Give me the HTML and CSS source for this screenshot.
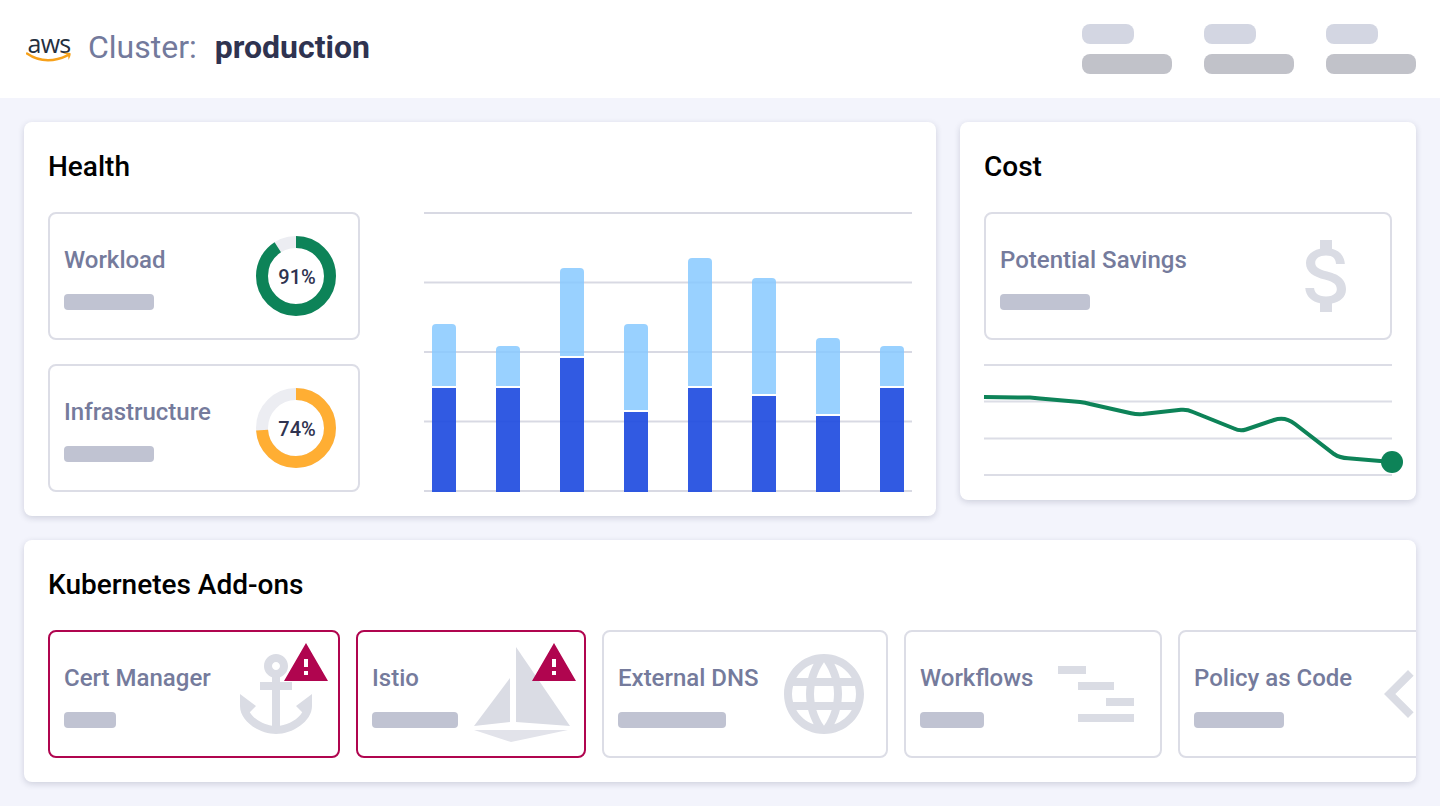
FILE: index.html
```html
<!DOCTYPE html>
<html lang="en">
<head>
<meta charset="utf-8">
<title>Cluster: production</title>
<link rel="stylesheet" href="styles.css">
</head>
<body>
<header class="topbar">
  <div class="cluster">
    <div class="aws">
      <span class="aws-word">aws</span>
      <svg class="aws-smile" width="46" height="12" viewBox="0 0 46 12"><path d="M1 1.500C7 5.700 14 8.200 22 8.200c7 0 13-1.600 19-4.600" fill="none" stroke="#f7a11a" stroke-width="2.400" stroke-linecap="round"/><path d="M37 1.200c2.600-.5 6-.6 7.600 0 .4 1.500-.8 4.800-2.200 6.800.2-2-.1-3.800-.8-5.100-1.200-.6-2.800-1.100-4.600-1.700z" fill="#f7a11a"/></svg>
    </div>
    <span class="cluster-label">Cluster:</span>
    <strong class="cluster-name">production</strong>
  </div>
  <div class="top-stats">
    <div class="top-stat"><i class="bar-top"></i><i class="bar-bottom"></i></div>
    <div class="top-stat"><i class="bar-top"></i><i class="bar-bottom"></i></div>
    <div class="top-stat"><i class="bar-top"></i><i class="bar-bottom"></i></div>
  </div>
</header>

<main class="content">
  <div class="row-top">
    <section class="card health">
      <h2 class="card-title">Health</h2>
      <div class="health-body">
        <div class="health-tiles">
          <div class="tile">
            <div class="tile-text"><span class="tile-label">Workload</span><i class="ph" style="width:90px"></i></div>
            <svg class="tile-icon" width="96" height="96" viewBox="0 0 96 96">
              <circle class="ring-track" cx="48" cy="48" r="34"/>
              <circle class="ring-green" cx="48" cy="48" r="34" pathLength="100" stroke-dasharray="91 100" transform="rotate(-90 48 48)"/>
              <text class="ring-text" x="49" y="56" text-anchor="middle">91%</text>
            </svg>
          </div>
          <div class="tile">
            <div class="tile-text"><span class="tile-label">Infrastructure</span><i class="ph" style="width:90px"></i></div>
            <svg class="tile-icon" width="96" height="96" viewBox="0 0 96 96">
              <circle class="ring-track" cx="48" cy="48" r="34"/>
              <circle class="ring-amber" cx="48" cy="48" r="34" pathLength="100" stroke-dasharray="74 100" transform="rotate(-90 48 48)"/>
              <text class="ring-text" x="49" y="56" text-anchor="middle">74%</text>
            </svg>
          </div>
        </div>
        <div class="bars">
          <div class="bar"><i class="bar-light" style="height:62px"></i><i class="bar-dark" style="height:104px"></i></div>
          <div class="bar"><i class="bar-light" style="height:40px"></i><i class="bar-dark" style="height:104px"></i></div>
          <div class="bar"><i class="bar-light" style="height:88px"></i><i class="bar-dark" style="height:134px"></i></div>
          <div class="bar"><i class="bar-light" style="height:86px"></i><i class="bar-dark" style="height:80px"></i></div>
          <div class="bar"><i class="bar-light" style="height:128px"></i><i class="bar-dark" style="height:104px"></i></div>
          <div class="bar"><i class="bar-light" style="height:116px"></i><i class="bar-dark" style="height:96px"></i></div>
          <div class="bar"><i class="bar-light" style="height:76px"></i><i class="bar-dark" style="height:76px"></i></div>
          <div class="bar"><i class="bar-light" style="height:40px"></i><i class="bar-dark" style="height:104px"></i></div>
        </div>
      </div>
    </section>

    <section class="card cost">
      <h2 class="card-title">Cost</h2>
      <div class="tile">
        <div class="tile-text"><span class="tile-label">Potential Savings</span><i class="ph" style="width:90px"></i></div>
        <svg class="tile-icon" width="96" height="96" viewBox="0 0 24 24"><path class="glyph" d="M11.8 10.900c-2.270-.590-3-1.200-3-2.150 0-1.090 1.010-1.850 2.700-1.850 1.780 0 2.440.850 2.500 2.100h2.210c-.070-1.720-1.120-3.300-3.210-3.810V3h-3v2.160c-1.940.420-3.500 1.680-3.500 3.610 0 2.310 1.910 3.460 4.700 4.130 2.500.600 3 1.480 3 2.410 0 .690-.490 1.790-2.700 1.790-2.060 0-2.870-.920-2.980-2.100h-2.200c.120 2.190 1.760 3.420 3.680 3.830V21h3v-2.150c1.950-.370 3.500-1.500 3.500-3.550 0-2.840-2.430-3.810-4.700-4.400z"/></svg>
      </div>
      <svg class="trend" width="408" height="112" viewBox="0 0 408 112">
        <g class="trend-grid">
          <line x1="0" x2="408" y1="1" y2="1"/>
          <line x1="0" x2="408" y1="37.500" y2="37.500"/>
          <line x1="0" x2="408" y1="74.500" y2="74.500"/>
          <line x1="0" x2="408" y1="111" y2="111"/>
        </g>
        <path class="trend-line" d="M0 33 L46 33.600 Q51 34 56 34.500 L96 38 Q101 38.700 106 40 L147 49.200 Q153 50.500 159 50 L197 45.800 Q203 45.200 209 48 L250 64.500 Q256 67.500 262 65.500 L290 56 Q301 52 311 60 L350 90 Q356 94 364 94.300 L408 98"/>
        <circle class="trend-dot" cx="408" cy="98" r="11"/>
      </svg>
    </section>
  </div>

  <section class="card addons">
    <h2 class="card-title">Kubernetes Add-ons</h2>
    <div class="addon-row">
      <div class="tile addon alert" style="width:292px">
        <div class="tile-text"><span class="tile-label">Cert Manager</span><i class="ph" style="width:52px"></i></div>
        <svg class="tile-icon" width="96" height="96" viewBox="0 0 24 24"><path class="glyph" fill-rule="evenodd" d="M17 15l1.550 1.550c-.960 1.690-3.330 3.040-5.550 3.370V11h3V9h-3V7.820C14.160 7.400 15 6.300 15 5c0-1.650-1.350-3-3-3S9 3.350 9 5c0 1.300.840 2.400 2 2.820V9H8v2h3v8.920c-2.220-.330-4.590-1.680-5.550-3.370L7 15l-4-3v3c0 3.880 4.920 7 9 7s9-3.120 9-7v-3l-4 3zM12 4c.550 0 1 .450 1 1s-.450 1-1 1-1-.450-1-1 .450-1 1-1z"/></svg>
        <svg class="warn warn-cert" width="48" height="48" viewBox="0 0 24 24"><path class="warn-glyph" d="M1 21h22L12 2 1 21zm12-3h-2v-2h2v2zm0-4h-2v-4h2v4z"/><rect class="warn-mark" x="11" y="10" width="2" height="4"/><rect class="warn-mark" x="11" y="16" width="2" height="2"/></svg>
      </div>
      <div class="tile addon alert" style="width:230px">
        <div class="tile-text"><span class="tile-label">Istio</span><i class="ph" style="width:86px"></i></div>
        <svg class="tile-icon" width="96" height="96" viewBox="0 0 96 96"><path class="glyph" d="M42 1 L42 76 L96 80 Z"/><path class="glyph" d="M36 32 L36 76 L0 80 Z"/><path class="glyph-soft" d="M0 84 L94 84 L37 96 Z"/></svg>
        <svg class="warn warn-istio" width="48" height="48" viewBox="0 0 24 24"><path class="warn-glyph" d="M1 21h22L12 2 1 21zm12-3h-2v-2h2v2zm0-4h-2v-4h2v4z"/><rect class="warn-mark" x="11" y="10" width="2" height="4"/><rect class="warn-mark" x="11" y="16" width="2" height="2"/></svg>
      </div>
      <div class="tile addon" style="width:286px">
        <div class="tile-text"><span class="tile-label">External DNS</span><i class="ph" style="width:108px"></i></div>
        <svg class="tile-icon" width="96" height="96" viewBox="0 0 24 24"><path class="glyph" d="M11.990 2C6.470 2 2 6.480 2 12s4.470 10 9.990 10C17.520 22 22 17.520 22 12S17.520 2 11.990 2zm6.930 6h-2.950c-.320-1.250-.780-2.450-1.380-3.560 1.840.630 3.370 1.910 4.330 3.560zM12 4.040c.830 1.200 1.480 2.530 1.910 3.960h-3.820c.430-1.430 1.080-2.760 1.910-3.960zM4.260 14C4.100 13.360 4 12.690 4 12s.100-1.360.260-2h3.380c-.080.660-.140 1.320-.140 2 0 .680.060 1.340.140 2H4.260zm.820 2h2.950c.320 1.250.780 2.450 1.380 3.560-1.840-.630-3.370-1.900-4.330-3.560zm2.950-8H5.080c.960-1.660 2.490-2.930 4.330-3.560C8.810 5.550 8.350 6.750 8.030 8zM12 19.960c-.830-1.200-1.480-2.530-1.910-3.960h3.820c-.430 1.430-1.080 2.760-1.910 3.960zM14.340 14H9.660c-.090-.660-.160-1.320-.160-2 0-.680.070-1.350.160-2h4.680c.090.650.160 1.320.160 2 0 .680-.070 1.340-.160 2zm.250 5.560c.600-1.110 1.060-2.310 1.380-3.560h2.950c-.960 1.650-2.490 2.930-4.330 3.560zM16.360 14c.080-.660.140-1.320.140-2 0-.680-.060-1.340-.140-2h3.380c.160.640.260 1.310.260 2s-.100 1.360-.260 2h-3.380z"/></svg>
      </div>
      <div class="tile addon" style="width:258px">
        <div class="tile-text"><span class="tile-label">Workflows</span><i class="ph" style="width:64px"></i></div>
        <svg class="tile-icon" width="96" height="96" viewBox="0 0 96 96"><rect class="glyph" x="8" y="20" width="28" height="8"/><rect class="glyph" x="28" y="36" width="36" height="8"/><rect class="glyph" x="56" y="52" width="28" height="8"/><rect class="glyph" x="28" y="68" width="56" height="8"/></svg>
      </div>
      <div class="tile addon" style="width:280px">
        <div class="tile-text"><span class="tile-label">Policy as Code</span><i class="ph" style="width:90px"></i></div>
        <svg class="tile-icon" width="96" height="96" viewBox="0 0 24 24"><path class="glyph" d="M15.410 7.410L14 6l-6 6 6 6 1.410-1.410L10.830 12z"/></svg>
      </div>
    </div>
  </section>
</main>
</body>
</html>
```
FILE: styles.css
```css
* { box-sizing: border-box; }
html, body { margin: 0; height: 806px; overflow: hidden; }
body { background: #f3f4fc; font-family: Roboto, "Liberation Sans", sans-serif; color: #000; }
i { display: block; }

.topbar { height: 98px; background: #fff; padding: 0 24px; display: flex; align-items: center; justify-content: space-between; }
.cluster { display: flex; align-items: center; margin-bottom: 4px; }
.aws { width: 46px; height: 30px; margin-left: 2px; margin-top: 4px; display: flex; flex-direction: column; align-items: center; }
.aws-word { font-family: "Open Sans", sans-serif; font-size: 25px; font-weight: 500; line-height: 18px; height: 18px; color: #252f3e; letter-spacing: -.7px; }
.aws-smile { flex: none; }
.cluster-label { font-size: 32px; color: #737a9c; margin-left: 16px; line-height: 40px; }
.cluster-name { font-size: 32px; font-weight: 700; color: #2f3350; margin-left: 18px; line-height: 40px; }
.top-stats { display: flex; gap: 32px; }
.top-stat { width: 90px; display: flex; flex-direction: column; gap: 10px; }
.bar-top { width: 52px; height: 20px; border-radius: 8px; background: #d3d6e2; }
.bar-bottom { width: 90px; height: 20px; border-radius: 8px; background: #c1c2c9; }

.content { padding: 24px; display: flex; flex-direction: column; gap: 24px; }
.row-top { display: flex; gap: 24px; align-items: flex-start; }
.card { background: #fff; border-radius: 8px; padding: 24px; box-shadow: 0 2px 6px rgba(40, 44, 80, .18); }
.card-title { margin: 0 0 25px; padding-top: 1px; font-size: 28px; font-weight: 500; line-height: 40px; color: #000; }
.health { width: 912px; height: 394px; }
.cost { width: 456px; height: 378px; }
.health-body { display: flex; justify-content: space-between; }
.health-tiles { width: 312px; display: flex; flex-direction: column; gap: 24px; }

.tile { position: relative; flex: none; height: 128px; border: 2px solid #dcdde6; border-radius: 8px; padding: 0 14px; display: flex; justify-content: space-between; align-items: center; background: #fff; }
.tile.alert { border-color: #b0054f; }
.tile-text { align-self: flex-start; padding-top: 30px; display: flex; flex-direction: column; gap: 18px; }
.tile-label { font-size: 24px; font-weight: 500; line-height: 32px; color: #757b9c; white-space: nowrap; }
.ph { height: 16px; border-radius: 4px; background: #c0c3d2; }
.tile-icon { flex: none; }
.glyph { fill: #dadce4; }
.glyph-soft { fill: #e2e3ea; }

.ring-track { fill: none; stroke: #ecedf2; stroke-width: 12; }
.ring-green { fill: none; stroke: #0d8358; stroke-width: 12; }
.ring-amber { fill: none; stroke: #ffae33; stroke-width: 12; }
.ring-text { font-family: Roboto, sans-serif; font-size: 20px; font-weight: 500; fill: #2f3350; }

.bars { width: 488px; height: 280px; padding: 0 8px; display: flex; justify-content: space-between; align-items: flex-end;
  background-image: linear-gradient(#d8d9e3 2px, transparent 2px); background-size: 100% 69.500px; }
.bar { width: 24px; display: flex; flex-direction: column; gap: 2px; }
.bar-light { background: rgba(134, 200, 255, .84); border-radius: 4px 4px 0 0; }
.bar-dark { background: rgba(32, 76, 224, .92); }

.trend { display: block; margin-top: 24px; overflow: visible; }
.trend-grid line { stroke: #dcdde6; stroke-width: 2; }
.trend-line { fill: none; stroke: #0d8358; stroke-width: 4; }
.trend-dot { fill: #0d8358; }

.addons { height: 242px; overflow: hidden; }
.addon-row { display: flex; gap: 16px; width: 1440px; }
.warn { position: absolute; top: 7px; }
.warn-cert { right: 8px; }
.warn-istio { right: 6px; }
.warn-glyph { fill: #b0054f; }
.warn-mark { fill: #fff; }
```
